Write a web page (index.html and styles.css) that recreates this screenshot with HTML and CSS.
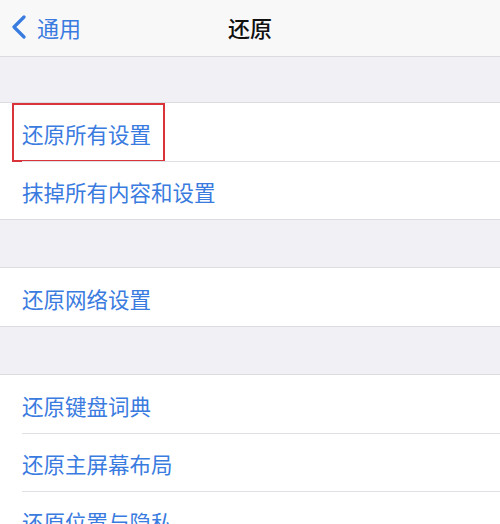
FILE: index.html
```html
<!DOCTYPE html>
<html lang="zh-CN">
    <head>
        <meta charset="UTF-8">
        <title>还原</title>
        <meta name="viewport" content="width=device-width, initial-scale=1.0">
        <link rel="stylesheet" href="styles.css">
    </head>
    <body>
        <header class="navbar">
            <a class="back" href="#">
                <svg class="chevron" width="16" height="24" viewBox="0 0 16 24">
                    <path d="M13 2 L3 12 L13 22" fill="none" stroke="currentColor" stroke-width="3.2" stroke-linecap="round" stroke-linejoin="round"/>
                </svg>
                <span>通用</span>
            </a>
            <h1 class="title">还原</h1>
        </header>

        <div class="gap"></div>
        <ul class="group">
            <li class="row highlighted"><span>还原所有设置</span></li>
            <li class="row"><span>抹掉所有内容和设置</span></li>
        </ul>

        <div class="gap"></div>
        <ul class="group">
            <li class="row"><span>还原网络设置</span></li>
        </ul>

        <div class="gap"></div>
        <ul class="group">
            <li class="row"><span>还原键盘词典</span></li>
            <li class="row"><span>还原主屏幕布局</span></li>
            <li class="row"><span>还原位置与隐私</span></li>
        </ul>
    </body>
</html>
```

FILE: styles.css
```css
body {
    margin: 0;
    background-color: #f0f0f5;
    font-family: "Noto Sans CJK SC", "Noto Sans", sans-serif;
    overflow: hidden;
}
.navbar {
    position: relative;
    height: 56px;
    background-color: #f8f8f9;
    border-bottom: 1px solid #dcdce0;
    display: flex;
    align-items: center;
    justify-content: center;
}
.back {
    position: absolute;
    left: 11px;
    top: 14px;
    display: flex;
    align-items: center;
    gap: 10px;
    color: #3a7be0;
    text-decoration: none;
    font-size: 22px;
    line-height: 26px;
}
.chevron {
    display: block;
}
.title {
    margin: 0;
    font-size: 22px;
    font-weight: 500;
    color: #111;
    line-height: 28px;
    margin-top: -2px;
}
.gap {
    height: 45px;
}
.group + .gap {
    height: 47px;
}
.group {
    list-style: none;
    margin: 0;
    padding: 0;
    background: #fff;
    border-top: 1px solid #dcdce0;
    border-bottom: 1px solid #dcdce0;
}
.row {
    position: relative;
    height: 58px;
    display: flex;
    align-items: center;
    padding-left: 22px;
    color: #3a7be0;
    font-size: 21.5px;
}
.row + .row::before {
    content: "";
    position: absolute;
    left: 22px;
    right: 0;
    top: 0;
    border-top: 1px solid #e0e0e4;
}
.row span {
    margin-top: 2px;
}
.highlighted::after {
    content: "";
    position: absolute;
    left: 12px;
    top: 0;
    width: 149px;
    height: 55px;
    border: 2px solid #d8343a;
}
```
